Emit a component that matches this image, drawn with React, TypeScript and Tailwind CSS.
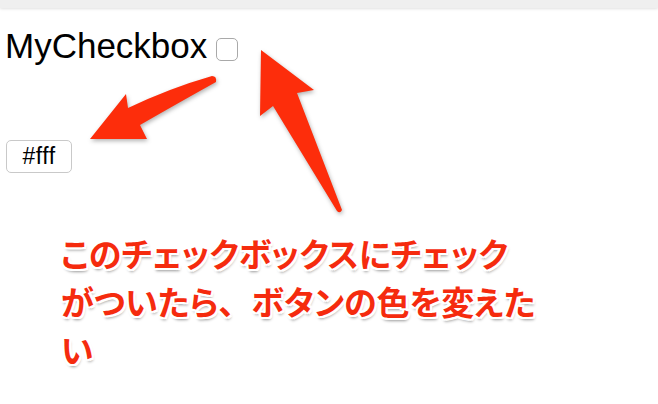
import { useState } from 'react'

function Arrows() {
  return (
    <svg
      className="pointer-events-none absolute inset-0 [filter:drop-shadow(1px_2px_2px_rgba(0,0,0,0.3))]"
      width={658}
      height={404}
      viewBox="0 0 658 404"
    >
      <path
        d="M90 139 L126 94 L128 108 Q170 88 212 76 Q217 76 216 82 Q180 102 140 125 L147 139 Z"
        fill="#fd2d0b"
      />
      <path
        d="M261 50 L314 90 L297 93 L342 210 Q340 214 337 211 L273 106 L260 116 Z"
        fill="#fd2d0b"
      />
    </svg>
  )
}

export default function App() {
  const [checked, setChecked] = useState(false)

  return (
    <div className="relative h-[404px] w-[658px] overflow-hidden bg-white font-['Liberation_Sans',Arial,sans-serif]">
      <div className="h-[8px] w-full bg-[#efefef] shadow-[0_1px_3px_rgba(0,0,0,0.12)]" />

      <div className="flex items-start pl-[5px] pt-[18px]">
        <span className="text-[35px] leading-[40px] text-black">MyCheckbox</span>
        <input
          type="checkbox"
          checked={checked}
          onChange={() => setChecked(!checked)}
          className="ml-[9px] mt-[12px] h-[23px] w-[22px] appearance-none rounded-[5px] border border-[#a9a9a9] bg-white"
        />
      </div>

      <div className="pl-[6px] pt-[74px]">
        <button
          className={`flex h-[33px] w-[66px] items-center justify-center rounded-[5px] border border-[#c9c9c9] text-[23px] tracking-[0.5px] text-black ${
            checked ? 'bg-[#ff0]' : 'bg-white'
          }`}
        >
          #fff
        </button>
      </div>

      <div className="pl-[61px] pt-[56px] font-['Noto_Sans_CJK_JP',sans-serif] text-[33px] font-bold leading-[48px] text-[#f52b0e] [font-feature-settings:'palt'] [text-shadow:1px_0_0_#fff,-1px_0_0_#fff,0_1px_0_#fff,0_-1px_0_#fff,2px_2px_0_#fff,-2px_-2px_0_#fff,2px_-2px_0_#fff,-2px_2px_0_#fff,2px_0_0_#fff,-2px_0_0_#fff,0_2px_0_#fff,0_-2px_0_#fff,1px_3px_3px_rgba(0,0,0,0.4)]">
        <div>このチェックボックスにチェック</div>
        <div>
          がついたら<span className="[font-feature-settings:normal]">、</span>ボタンの色を変えた
        </div>
        <div>い</div>
      </div>

      <Arrows />
    </div>
  )
}
